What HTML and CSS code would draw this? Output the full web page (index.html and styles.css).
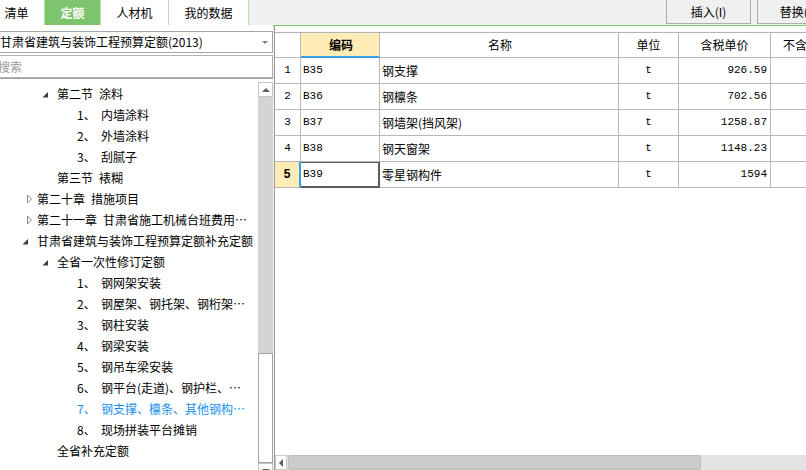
FILE: index.html
```html
<!DOCTYPE html>
<html lang="zh-CN">
<head>
<meta charset="utf-8">
<title>定额</title>
<link rel="stylesheet" href="styles.css">
</head>
<body>
<div class="app">
  <header class="topbar">
    <nav class="tabs">
      <div class="tab tab-2">清单</div>
      <div class="tab tab-2 active">定额</div>
      <div class="tab tab-3">人材机</div>
      <div class="tab tab-4">我的数据</div>
    </nav>
    <div class="actions">
      <button class="btn">插入(I)</button>
      <button class="btn">替换(R)</button>
    </div>
  </header>
  <main class="main">
    <aside class="left">
      <div class="select"><span>甘肃省建筑与装饰工程预算定额(2013)</span><i class="caret"></i></div>
      <div class="search">搜索</div>
      <div class="tree-wrap">
        <ul class="tree">
          <li class="node l2"><span class="exp"><svg viewBox="0 0 10 10"><path d="M0.5 8.5H6V3Z" fill="#3c3c3c"/></svg></span><span>第二节&ensp;涂料</span></li>
          <li class="node l3"><span class="num">1、</span><span>内墙涂料</span></li>
          <li class="node l3"><span class="num">2、</span><span>外墙涂料</span></li>
          <li class="node l3"><span class="num">3、</span><span>刮腻子</span></li>
          <li class="node l2"><span class="exp"></span><span>第三节&ensp;裱糊</span></li>
          <li class="node l1"><span class="exp"><svg viewBox="0 0 10 10"><path d="M5.5 1L9.5 5L5.5 9Z" fill="#fff" stroke="#8a8a8a"/></svg></span><span>第二十章&ensp;措施项目</span></li>
          <li class="node l1"><span class="exp"><svg viewBox="0 0 10 10"><path d="M5.5 1L9.5 5L5.5 9Z" fill="#fff" stroke="#8a8a8a"/></svg></span><span>第二十一章&ensp;甘肃省施工机械台班费用…</span></li>
          <li class="node l1"><span class="exp"><svg viewBox="0 0 10 10"><path d="M0.5 8.5H6V3Z" fill="#3c3c3c"/></svg></span><span>甘肃省建筑与装饰工程预算定额补充定额</span></li>
          <li class="node l2"><span class="exp"><svg viewBox="0 0 10 10"><path d="M0.5 8.5H6V3Z" fill="#3c3c3c"/></svg></span><span>全省一次性修订定额</span></li>
          <li class="node l3"><span class="num">1、</span><span>钢网架安装</span></li>
          <li class="node l3"><span class="num">2、</span><span>钢屋架、钢托架、钢桁架…</span></li>
          <li class="node l3"><span class="num">3、</span><span>钢柱安装</span></li>
          <li class="node l3"><span class="num">4、</span><span>钢梁安装</span></li>
          <li class="node l3"><span class="num">5、</span><span>钢吊车梁安装</span></li>
          <li class="node l3"><span class="num">6、</span><span>钢平台(走道)、钢护栏、…</span></li>
          <li class="node l3 sel"><span class="num">7、</span><span>钢支撑、檩条、其他钢构…</span></li>
          <li class="node l3"><span class="num">8、</span><span>现场拼装平台摊销</span></li>
          <li class="node l2"><span class="exp"></span><span>全省补充定额</span></li>
        </ul>
        <div class="vscroll">
          <div class="sb-up"><i class="tri-up"></i></div>
          <div class="sb-thumb"></div>
          <div class="sb-track"></div>
          <div class="sb-down"><i class="tri-down"></i></div>
        </div>
      </div>
    </aside>
    <div class="splitter"></div>
    <section class="right">
      <div class="grid">
        <div class="row head">
          <div class="c c-no"></div>
          <div class="c c-code sorted">编码</div>
          <div class="c c-name">名称</div>
          <div class="c c-unit">单位</div>
          <div class="c c-price">含税单价</div>
          <div class="c c-more">不含税单价</div>
        </div>
        <div class="row">
          <div class="c c-no">1</div>
          <div class="c c-code">B35</div>
          <div class="c c-name">钢支撑</div>
          <div class="c c-unit">t</div>
          <div class="c c-price">926.59</div>
          <div class="c c-more"></div>
        </div>
        <div class="row">
          <div class="c c-no">2</div>
          <div class="c c-code">B36</div>
          <div class="c c-name">钢檩条</div>
          <div class="c c-unit">t</div>
          <div class="c c-price">702.56</div>
          <div class="c c-more"></div>
        </div>
        <div class="row">
          <div class="c c-no">3</div>
          <div class="c c-code">B37</div>
          <div class="c c-name">钢墙架(挡风架)</div>
          <div class="c c-unit">t</div>
          <div class="c c-price">1258.87</div>
          <div class="c c-more"></div>
        </div>
        <div class="row">
          <div class="c c-no">4</div>
          <div class="c c-code">B38</div>
          <div class="c c-name">钢天窗架</div>
          <div class="c c-unit">t</div>
          <div class="c c-price">1148.23</div>
          <div class="c c-more"></div>
        </div>
        <div class="row cur">
          <div class="c c-no">5</div>
          <div class="c c-code">B39</div>
          <div class="c c-name">零星钢构件</div>
          <div class="c c-unit">t</div>
          <div class="c c-price">1594</div>
          <div class="c c-more"></div>
        </div>
      </div>
      <div class="hscroll">
        <div class="hs-left"><i class="tri-left"></i></div>
        <div class="hs-thumb"></div>
      </div>
    </section>
  </main>
</div>
</body>
</html>
```

FILE: styles.css
```css
* {
  box-sizing: border-box;
  margin: 0;
  padding: 0;
}

html, body {
  width: 806px;
  height: 470px;
  overflow: hidden;
}

body {
  font: 12px/1 "Noto Sans CJK SC", "Noto Sans", sans-serif;
  color: #000;
  background: #fff;
}

.app {
  display: flex;
  flex-direction: column;
  height: 470px;
}

/* ---------- top bar ---------- */
.topbar {
  display: flex;
  flex: none;
  height: 25px;
  background: #f0f0f0;
  overflow: hidden;
}

.tabs {
  display: flex;
  flex: none;
  margin-left: -11px;
}

.tab {
  flex: none;
  height: 25px;
  line-height: 25px;
  text-align: center;
  background: #fff;
  border-right: 1px solid #b7dfa9;
}

.tab-2 { width: 56px; }
.tab-3 { width: 68px; }
.tab-4 { width: 80px; }

.tab.active {
  background: #7ec46d;
  color: #fff;
  font-weight: bold;
}

.actions {
  display: flex;
  flex: none;
  gap: 6px;
  margin-left: 417px;
}

.btn {
  flex: none;
  width: 85px;
  height: 25px;
  margin-top: -1px;
  border: 1px solid #adadad;
  background: #f0f0f0;
  font: inherit;
  color: #000;
  text-align: center;
  line-height: 22px;
}

/* ---------- main ---------- */
.main {
  display: flex;
  flex: 1;
  min-height: 0;
}

.left {
  width: 273px;
  flex: none;
  display: flex;
  flex-direction: column;
  padding-top: 6px;
  background: #fff;
}

.select {
  display: flex;
  align-items: center;
  height: 22px;
  margin-left: -4px;
  padding-left: 3px;
  padding-right: 4px;
  border: 1px solid #a6a6a6;
  background: #fff;
  white-space: nowrap;
}

.caret {
  margin-left: auto;
  width: 0;
  height: 0;
  border-left: 3px solid transparent;
  border-right: 3px solid transparent;
  border-top: 3px solid #7a7a7a;
}

.search {
  height: 23px;
  margin-top: 2px;
  margin-left: -5px;
  padding-left: 2px;
  border: 1px solid #b0b0b0;
  color: #9a9a9a;
  line-height: 21px;
}

.tree-wrap {
  display: flex;
  flex: 1;
  min-height: 0;
  border-top: 1px solid #a0a0a0;
  overflow: hidden;
}

.tree {
  flex: 1;
  min-width: 0;
  list-style: none;
  padding-top: 4px;
  overflow: hidden;
  white-space: nowrap;
}

.node {
  display: flex;
  align-items: center;
  height: 21px;
}

.l1 { padding-left: 22px; }
.l2 { padding-left: 42px; }
.l3 { padding-left: 77px; }

.exp {
  flex: none;
  width: 10px;
  height: 10px;
  margin-right: 5px;
}

.exp svg {
  display: block;
  width: 10px;
  height: 10px;
}

.num {
  flex: none;
  width: 24px;
}

.sel {
  color: #1590f0;
}

.vscroll {
  flex: none;
  width: 15px;
  margin-top: 3px;
  display: flex;
  flex-direction: column;
}

.sb-up, .sb-down {
  flex: none;
  height: 15px;
  border: 1px solid #c4c4c4;
  background: #fff;
  display: flex;
  align-items: center;
  justify-content: center;
}

.tri-up {
  width: 0;
  height: 0;
  border-left: 4px solid transparent;
  border-right: 4px solid transparent;
  border-bottom: 4px solid #5e5e5e;
}

.tri-down {
  width: 0;
  height: 0;
  border-left: 4px solid transparent;
  border-right: 4px solid transparent;
  border-top: 4px solid #5e5e5e;
}

.sb-thumb {
  flex: none;
  height: 256px;
  background: #d4d4d4;
}

.sb-track {
  flex: none;
  height: 110px;
  background: #fff;
  border: 1px solid #a4a4a4;
}

.splitter {
  flex: none;
  width: 2px;
  background: #f0f0f0;
  border-top: 1px solid #7ec46d;
  border-right: 1px solid #9c9c9c;
}

/* ---------- grid ---------- */
.right {
  flex: 1;
  min-width: 0;
  display: flex;
  flex-direction: column;
  border-top: 1px solid #7ec46d;
  padding-top: 6px;
  background: #fff;
}

.grid {
  flex: 1;
  min-height: 0;
  overflow: hidden;
  border-top: 1px solid #b4b4b4;
}

.row {
  display: grid;
  grid-template-columns: 26px 79px 239px 60px 92px 85px;
  height: 26px;
}

.row.head {
  height: 25px;
}

.c {
  display: flex;
  align-items: center;
  overflow: hidden;
  white-space: nowrap;
  border-right: 1px solid #b8b8b8;
  border-bottom: 1px solid #b8b8b8;
}

.head .c {
  justify-content: center;
}

.head .sorted {
  background: #fdecb6;
  font-weight: bold;
  border-bottom: 2px solid #3a9ee4;
}

.c-no {
  justify-content: center;
  font-family: "Liberation Mono", monospace;
  font-size: 11px;
}

.c-code {
  padding-left: 2px;
  font-family: "Liberation Mono", monospace;
  font-size: 11px;
}

.head .c-code {
  font-family: "Noto Sans CJK SC", sans-serif;
  font-size: 12px;
}

.c-name {
  padding-left: 2px;
}

.c-unit {
  justify-content: center;
  font-family: "Liberation Mono", monospace;
  font-size: 11px;
}

.c-price {
  justify-content: flex-end;
  padding-right: 3px;
  font-family: "Liberation Mono", monospace;
  font-size: 11px;
}

.head .c-unit,
.head .c-price {
  font-family: "Noto Sans CJK SC", sans-serif;
  font-size: 12px;
  padding-right: 0;
}

.cur .c-no {
  background: #fdecb6;
  font-weight: bold;
  font-size: 12px;
  border-right: 2px solid #3a9ee4;
}

.cur .c-code {
  border-right-color: #5c5c5c;
  border-bottom-color: #5c5c5c;
  box-shadow: inset 0 1px #5c5c5c, inset -1px 0 #5c5c5c, inset 0 -1px #5c5c5c;
}

.hscroll {
  flex: none;
  height: 15px;
  display: flex;
  background: #e3e3e3;
}

.hs-left {
  flex: none;
  width: 12px;
  border: 1px solid #c8c8c8;
  background: #fff;
  display: flex;
  align-items: center;
  justify-content: center;
}

.tri-left {
  width: 0;
  height: 0;
  border-top: 4px solid transparent;
  border-bottom: 4px solid transparent;
  border-right: 4px solid #5e5e5e;
}

.hs-thumb {
  flex: none;
  width: 413px;
  margin-left: 1px;
  background: #cbcbcb;
  border: 1px solid #bfbfbf;
  border-radius: 2px;
}
```
